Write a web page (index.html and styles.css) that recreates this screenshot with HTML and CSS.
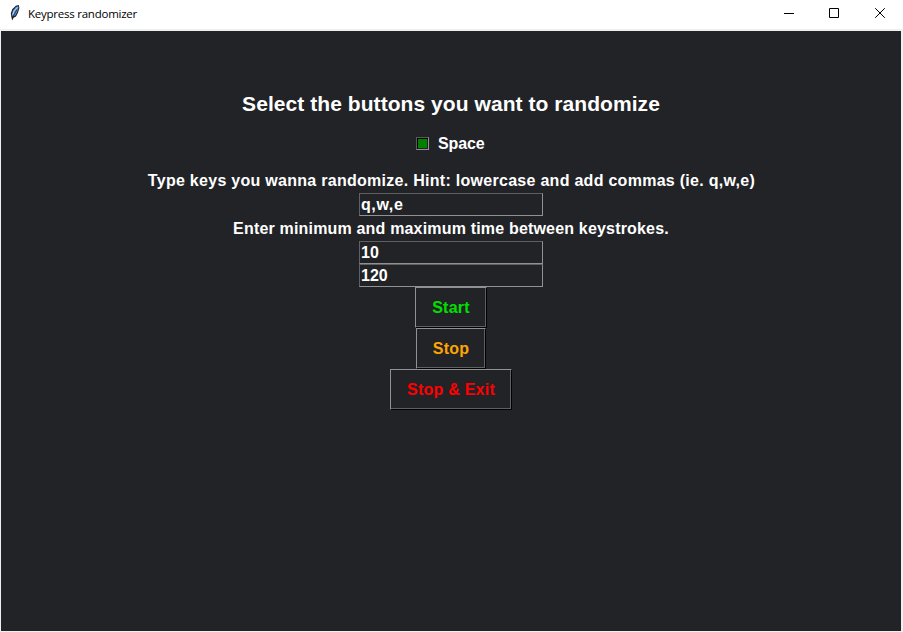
FILE: index.html
```html
<!DOCTYPE html>
<html lang="en">
<head>
<meta charset="utf-8">
<title>Keypress randomizer</title>
<link rel="stylesheet" href="styles.css">
</head>
<body>
<header class="titlebar">
  <svg class="feather" width="10" height="16" viewBox="0 0 10 16">
    <path d="M8.8 0 5.8 .8 2.2 4.2 .8 8.4 1.4 12.2 2.2 15.4 3.6 12.8 6 11.5 8 7.8 9.4 3Z" fill="#1c2027"/>
    <path d="M8 1 5.8 2.2 3 5.4 1.8 9.4 2.6 11.6 5.2 10.6 7 7.3 8.5 2.8Z" fill="#5d94d8"/>
    <path d="M7.4 2.2 4.2 5.8 2.7 9.6" stroke="#c6ddf5" stroke-width=".9" fill="none"/>
    <path d="M7 4.6 4.4 9 2.6 12.5" stroke="#1c2027" stroke-width=".8" fill="none"/>
  </svg>
  <h1 class="title">Keypress randomizer</h1>
  <div class="controls">
    <svg width="10" height="10" viewBox="0 0 10 10"><path d="M0 5.5H10" stroke="#000"/></svg>
    <svg width="10" height="10" viewBox="0 0 10 10"><path d="M.5 .5H9.5V9.5H.5Z" fill="none" stroke="#000"/></svg>
    <svg width="10" height="10" viewBox="0 0 10 10"><path d="M.2 .2 9.8 9.8M9.8 .2 .2 9.8" stroke="#000"/></svg>
  </div>
</header>
<main class="client">
  <h2 class="heading">Select the buttons you want to randomize</h2>
  <label class="check"><span class="box"></span><span class="check-text">Space</span></label>
  <p class="hint keys-hint">Type keys you wanna randomize. Hint: lowercase and add commas (ie. q,w,e)</p>
  <input class="entry keys" type="text" value="q,w,e">
  <p class="hint time-hint">Enter minimum and maximum time between keystrokes.</p>
  <input class="entry" type="text" value="10">
  <input class="entry" type="text" value="120">
  <button class="button start">Start</button>
  <button class="button stop">Stop</button>
  <button class="button exit">Stop &amp; Exit</button>
</main>
</body>
</html>
```
FILE: styles.css
```css
* { box-sizing: border-box; }
body {
  margin: 0;
  height: 632px;
  overflow: hidden;
  background: #f0f0f0;
  display: flex;
  flex-direction: column;
}
.titlebar {
  height: 29px;
  flex: none;
  background: #fff;
  display: flex;
  align-items: flex-start;
  padding: 5px 18px 0 10px;
}
.title {
  margin: 0 0 0 8px;
  font: 400 11.5px/18px "Open Sans", sans-serif;
  letter-spacing: -.24px;
  color: #000;
}
.controls {
  margin: 3px 0 0 auto;
  display: flex;
  gap: 36px;
}
.controls svg { display: block; }
.controls svg:first-child { margin-right: -1px; }
.client {
  margin: 2px 2px 1px 1px;
  height: 600px;
  background: #222327;
  color: #fff;
  font: 700 16px/18px "Liberation Sans", Arial, sans-serif;
  display: flex;
  flex-direction: column;
  align-items: center;
}
.heading {
  margin: 60px 0 0;
  font-size: 21px;
  line-height: 26px;
  letter-spacing: .06px;
}
.check {
  margin-top: 17px;
  height: 18px;
  width: 70px;
  display: flex;
  align-items: center;
  gap: 9px;
}
.check-text {
  padding-top: 2px;
  letter-spacing: -.1px;
}
.box {
  width: 13px;
  height: 13px;
  background: #008000;
  border: 1px solid;
  border-color: #5a5a5c #909192 #909192 #5a5a5c;
  box-shadow: inset 1px 1px #000, inset -1px -1px #222327;
}
.hint { margin: 0; height: 25px; line-height: 25px; }
.keys-hint { margin-top: 16px; padding-left: 1px; letter-spacing: .28px; }
.time-hint { letter-spacing: .18px; }
.entry {
  width: 184px;
  height: 23px;
  padding: 0 1px;
  border: 1px solid;
  border-color: #5f6062 #909192 #909192 #5f6062;
  border-radius: 0;
  outline: 0;
  background: #222327;
  color: #fff;
  font: inherit;
}
.keys { letter-spacing: .6px; }
.button {
  height: 41px;
  padding: 0;
  border: 1px solid;
  border-color: #909192 #000 #000 #909192;
  border-radius: 0;
  box-shadow: inset -1px -1px #5f6062;
  background: #222327;
  font: inherit;
  letter-spacing: .25px;
}
.start { width: 72px; color: #00e000; }
.stop { width: 70px; color: #ffa500; }
.exit { width: 122px; color: #f00; }
```
